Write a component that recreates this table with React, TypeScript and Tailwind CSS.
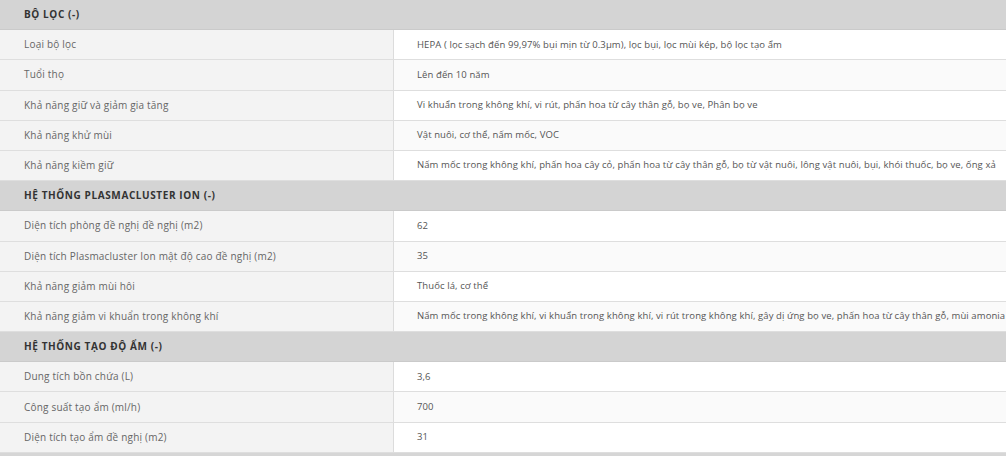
import React from "react";

type Section = { title: string; rows: [string, string][] };

const sections: Section[] = [
  {
    title: "BỘ LỌC (-)",
    rows: [
      ["Loại bộ lọc", "HEPA ( lọc sạch đến 99,97% bụi mịn từ 0.3µm), lọc bụi, lọc mùi kép, bộ lọc tạo ẩm"],
      ["Tuổi thọ", "Lên đến 10 năm"],
      ["Khả năng giữ và giảm gia tăng", "Vi khuẩn trong không khí, vi rút, phấn hoa từ cây thân gỗ, bọ ve, Phân bọ ve"],
      ["Khả năng khử mùi", "Vật nuôi, cơ thể, nấm mốc, VOC"],
      ["Khả năng kiềm giữ", "Nấm mốc trong không khí, phấn hoa cây cỏ, phấn hoa từ cây thân gỗ, bọ từ vật nuôi, lông vật nuôi, bụi, khói thuốc, bọ ve, ống xả"],
    ],
  },
  {
    title: "HỆ THỐNG PLASMACLUSTER ION (-)",
    rows: [
      ["Diện tích phòng đề nghị đề nghị (m2)", "62"],
      ["Diện tích Plasmacluster Ion mật độ cao đề nghị (m2)", "35"],
      ["Khả năng giảm mùi hôi", "Thuốc lá, cơ thể"],
      ["Khả năng giảm vi khuẩn trong không khí", "Nấm mốc trong không khí, vi khuẩn trong không khí, vi rút trong không khí, gây dị ứng bọ ve, phấn hoa từ cây thân gỗ, mùi amonia"],
    ],
  },
  {
    title: "HỆ THỐNG TẠO ĐỘ ẨM (-)",
    rows: [
      ["Dung tích bồn chứa (L)", "3,6"],
      ["Công suất tạo ẩm (ml/h)", "700"],
      ["Diện tích tạo ẩm đề nghị (m2)", "31"],
    ],
  },
];

export default function App() {
  return (
    <div
      className="w-[1006px] h-[456px] overflow-hidden bg-white"
      style={{ fontFamily: '"Open Sans", "Noto Sans", sans-serif' }}
    >
      <div className="w-[1300px] border-b-[3px] border-[#d6d6d6]">
        {sections.map((s) => (
          <div key={s.title}>
            <div className="h-[30.2px] flex items-center bg-[#d4d4d4] border-b border-[#cacaca] pl-[24px] text-[10px] font-bold tracking-[0.06em] text-[#333]">
              {s.title}
            </div>
            {s.rows.map(([k, v], i) => (
              <div key={k} className="h-[30.2px] flex border-b border-[#dedede]">
                <div className="w-[394px] shrink-0 flex items-center bg-[#f3f3f3] border-r border-[#dcdcdc] pl-[24px] text-[10px] tracking-[0.02em] text-[#666]">
                  {k}
                </div>
                <div
                  className={
                    "flex-1 flex items-center pl-[23px] text-[9.5px] tracking-[0.01em] text-[#555] whitespace-nowrap " +
                    (i % 2 === 1 ? "bg-[#fafafa]" : "bg-white")
                  }
                >
                  {v}
                </div>
              </div>
            ))}
          </div>
        ))}
      </div>
    </div>
  );
}
